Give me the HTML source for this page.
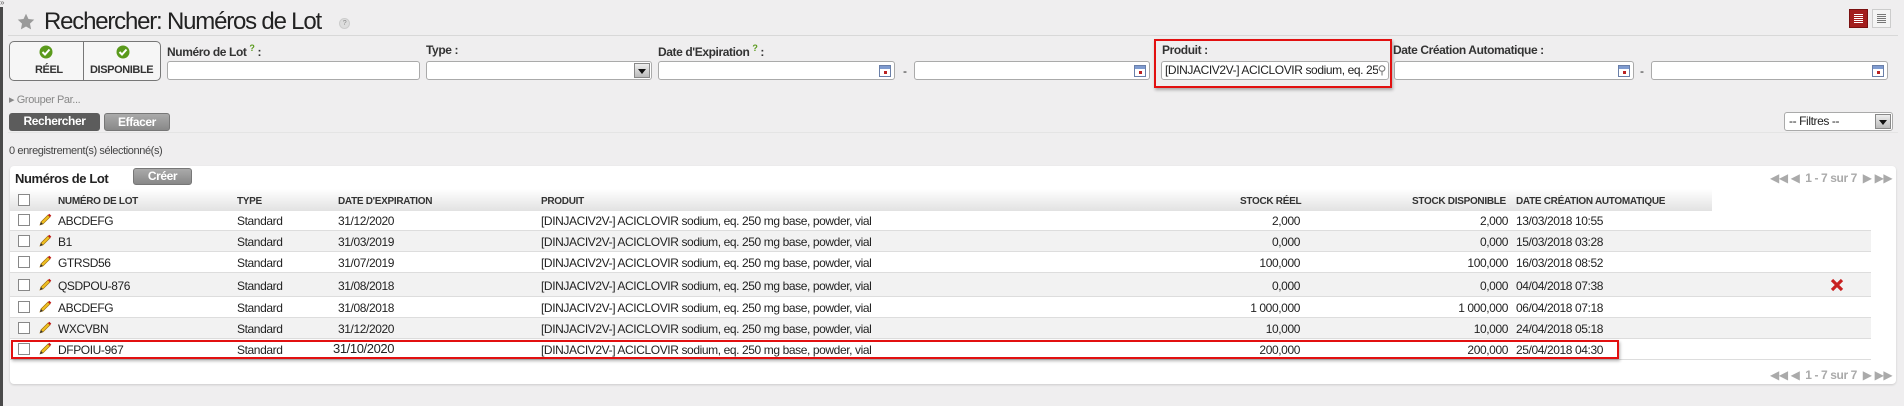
<!DOCTYPE html>
<html><head><meta charset="utf-8"><style>
*{margin:0;padding:0;box-sizing:border-box}
body{width:1904px;height:406px;background:#efeeef;font-family:"Liberation Sans",sans-serif;color:#222;position:relative;overflow:hidden;font-size:12px;letter-spacing:-0.4px}
.a{position:absolute;white-space:nowrap}
.inp{position:absolute;height:19px;background:#fff;border:1px solid #aaa;border-radius:3px}
.lbl{position:absolute;font-size:12px;color:#333}
.cal{position:absolute;right:3px;top:3px;width:12px;height:12px;border:1px solid #6a7fa8;background:linear-gradient(#7f9bd0 0 3px,#fff 3px)}
.cal:after{content:"";position:absolute;left:4px;top:5px;width:3px;height:3px;background:#b22}
.dd{position:absolute;right:1px;top:1px;width:16px;height:15px;background:linear-gradient(#eee,#bbb);border:1px solid #888}
.dd:after{content:"";position:absolute;left:3px;top:5px;border:4px solid transparent;border-top:5px solid #111}
.row{position:absolute;left:10px;width:1861px;border-bottom:1px solid #ddd}
.cb{position:absolute;left:8px;width:12px;height:12px;border:1px solid #888;background:#fff}
.hd{position:absolute;font-size:10px;font-weight:bold;color:#333;top:196px;letter-spacing:-0.3px}
.pen{position:absolute;left:28px;width:14px;height:14px}
.btn{position:absolute;height:18px;border-radius:3px;color:#fff;font-weight:bold;font-size:12px;text-align:center;line-height:17px}
</style></head><body>
<div class="a" style="left:0;top:0;width:3px;height:406px;background:#4a4a4a"></div>
<div class="a" style="left:0;top:-2px;font-size:8px;color:#666;background:#efeeef">»</div>
<svg class="a" style="left:17px;top:13px" width="18" height="18" viewBox="0 0 24 24"><path d="M12 1l3.3 7 7.7.9-5.7 5.3 1.5 7.6L12 18l-6.8 3.8 1.5-7.6L1 8.9 8.7 8z" fill="#9a9a9a"/></svg>
<div class="a" style="left:44px;top:8px;font-size:24px;letter-spacing:-1.2px;color:#222">Rechercher: Numéros de Lot</div>
<div class="a" style="left:339px;top:18px;width:11px;height:11px;border-radius:50%;background:#ddd;border:1px solid #ccc;font-size:7px;color:#888;text-align:center;line-height:10px">?</div>
<div class="a" style="left:8px;top:35px;width:1890px;height:1px;background:#d8d8d8"></div>
<div class="a" style="left:1849px;top:9px;width:19px;height:19px;background:#a31e1e;border:1px solid #7a1010"><div style="margin:4px 4px;height:9px;background:repeating-linear-gradient(#fff 0 1px,transparent 1px 2px)"></div></div>
<div class="a" style="left:1872px;top:9px;width:19px;height:19px;background:#f4f4f4;border:1px solid #ccc"><div style="margin:4px 4px;height:9px;background:repeating-linear-gradient(#777 0 1px,transparent 1px 2px)"></div></div>
<div class="a" style="left:9px;top:41px;width:152px;height:40px;border:1px solid #777;border-radius:5px;background:#f6f6f6"></div>
<div class="a" style="left:83px;top:41px;width:1px;height:40px;background:#777"></div>
<svg class="a" style="left:39px;top:45px" width="14" height="14" viewBox="0 0 14 14"><circle cx="7" cy="7" r="6.5" fill="#5a9a1c"/><path d="M3.5 7l2.5 2.5 4.5-5" stroke="#fff" stroke-width="2" fill="none"/></svg>
<svg class="a" style="left:116px;top:45px" width="14" height="14" viewBox="0 0 14 14"><circle cx="7" cy="7" r="6.5" fill="#5a9a1c"/><path d="M3.5 7l2.5 2.5 4.5-5" stroke="#fff" stroke-width="2" fill="none"/></svg>
<div class="a" style="left:35px;top:64px;font-size:11px;font-weight:bold;color:#333">RÉEL</div>
<div class="a" style="left:90px;top:64px;font-size:11px;font-weight:bold;color:#333">DISPONIBLE</div>
<div class="lbl" style="left:167px;top:43px;font-weight:bold">Numéro de Lot <sup style="color:#5a9a1c;font-size:9px">?</sup> :</div>
<div class="inp" style="left:167px;top:61px;width:253px"></div>
<div class="lbl" style="left:426px;top:43px;font-weight:bold">Type :</div>
<div class="inp" style="left:426px;top:61px;width:226px"><div class="dd"></div></div>
<div class="lbl" style="left:658px;top:43px;font-weight:bold">Date d'Expiration <sup style="color:#5a9a1c;font-size:9px">?</sup> :</div>
<div class="inp" style="left:658px;top:61px;width:237px"><div class="cal"></div></div>
<div class="a" style="left:903px;top:64px">-</div>
<div class="inp" style="left:914px;top:61px;width:236px"><div class="cal"></div></div>
<div class="a" style="left:1154px;top:39px;width:238px;height:49px;border:2px solid #e21010;box-shadow:1px 2px 3px rgba(0,0,0,.3)"></div>
<div class="lbl" style="left:1162px;top:43px;font-weight:bold">Produit :</div>
<div class="inp" style="left:1161px;top:61px;width:228px;overflow:hidden;font-size:12px;line-height:17px;padding-left:3px">[DINJACIV2V-] ACICLOVIR sodium, eq. 250 mg<span style="position:absolute;right:2px;top:0;background:#fff;color:#777">&#9906;</span></div>
<div class="lbl" style="left:1393px;top:43px;font-weight:bold">Date Création Automatique :</div>
<div class="inp" style="left:1394px;top:61px;width:240px"><div class="cal"></div></div>
<div class="a" style="left:1640px;top:64px">-</div>
<div class="inp" style="left:1651px;top:61px;width:237px"><div class="cal"></div></div>
<div class="a" style="left:9px;top:93px;font-size:11px;color:#888">▸ Grouper Par...</div>
<div class="btn" style="left:9px;top:113px;width:91px;background:#5c5c5c">Rechercher</div>
<div class="btn" style="left:104px;top:113px;width:66px;background:linear-gradient(#aaa,#888);border:1px solid #777">Effacer</div>
<div class="inp" style="left:1784px;top:112px;width:109px;border-radius:3px;padding-left:4px;line-height:17px;font-size:12px">-- Filtres --<div class="dd"></div></div>
<div class="a" style="left:8px;top:132px;width:1890px;height:1px;background:#e4e4e4"></div>
<div class="a" style="left:9px;top:145px;font-size:11px;color:#444">0 enregistrement(s) sélectionné(s)</div>
<div class="a" style="left:10px;top:166px;width:1886px;height:218px;background:#fff;border-radius:4px;box-shadow:0 1px 2px rgba(0,0,0,.15)"></div>
<div class="a" style="left:15px;top:171px;font-size:13px;font-weight:bold;color:#222">Numéros de Lot</div>
<div class="btn" style="left:133px;top:168px;width:59px;height:17px;background:linear-gradient(#aaa,#888);border:1px solid #777;line-height:15px">Créer</div>
<div class="a" style="left:1770px;top:171px;font-size:12px;color:#aaa">◀◀ ◀ &nbsp;<b>1 - 7 sur 7</b>&nbsp; ▶ ▶▶</div>
<div class="a" style="left:10px;top:189px;width:1702px;height:22px;background:linear-gradient(#fff,#e2e2e2)"></div>
<div class="cb" style="top:194px;left:18px"></div>
<div class="hd" style="left:58px">NUMÉRO DE LOT</div>
<div class="hd" style="left:237px">TYPE</div>
<div class="hd" style="left:338px">DATE D'EXPIRATION</div>
<div class="hd" style="left:541px">PRODUIT</div>
<div class="hd" style="left:1240px">STOCK RÉEL</div>
<div class="hd" style="left:1412px">STOCK DISPONIBLE</div>
<div class="hd" style="left:1516px">DATE CRÉATION AUTOMATIQUE</div>
<div class="a" style="left:10px;top:211px;width:1861px">
<div class="row" style="left:0;top:0;height:20px;background:#fff"></div>
<div class="row" style="left:0;top:20px;height:21px;background:#f2f2f2"></div>
<div class="row" style="left:0;top:41px;height:21px;background:#fff"></div>
<div class="row" style="left:0;top:62px;height:24px;background:#f2f2f2"></div>
<div class="row" style="left:0;top:86px;height:21px;background:#fff"></div>
<div class="row" style="left:0;top:107px;height:21px;background:#f2f2f2"></div>
<div class="row" style="left:0;top:128px;height:21px;background:#fff"></div>
</div>
<svg width="0" height="0" style="position:absolute"><defs><symbol id="p" viewBox="0 0 14 14"><path d="M2 12l1-3 7-7 2 2-7 7z" fill="#f0c020" stroke="#a07010" stroke-width=".7"/><path d="M10 2l1.3-1.3 2 2L12 4z" fill="#c01818"/><path d="M2 12l1-3 2 2z" fill="#333"/></symbol></defs></svg>
<div style="position:absolute;left:0;top:0;width:1904px;height:406px">
<div class="cb" style="left:18px;top:214px"></div><svg class="pen" style="left:38px;top:213px"><use href="#p"/></svg>
<div class="a" style="left:58px;top:214px">ABCDEFG</div><div class="a" style="left:237px;top:214px">Standard</div><div class="a" style="left:338px;top:214px">31/12/2020</div><div class="a" style="left:541px;top:214px">[DINJACIV2V-] ACICLOVIR sodium, eq. 250 mg base, powder, vial</div><div class="a" style="right:604px;top:214px">2,000</div><div class="a" style="right:396px;top:214px">2,000</div><div class="a" style="left:1516px;top:214px">13/03/2018 10:55</div>

<div class="cb" style="left:18px;top:235px"></div><svg class="pen" style="left:38px;top:234px"><use href="#p"/></svg>
<div class="a" style="left:58px;top:235px">B1</div><div class="a" style="left:237px;top:235px">Standard</div><div class="a" style="left:338px;top:235px">31/03/2019</div><div class="a" style="left:541px;top:235px">[DINJACIV2V-] ACICLOVIR sodium, eq. 250 mg base, powder, vial</div><div class="a" style="right:604px;top:235px">0,000</div><div class="a" style="right:396px;top:235px">0,000</div><div class="a" style="left:1516px;top:235px">15/03/2018 03:28</div>

<div class="cb" style="left:18px;top:256px"></div><svg class="pen" style="left:38px;top:255px"><use href="#p"/></svg>
<div class="a" style="left:58px;top:256px">GTRSD56</div><div class="a" style="left:237px;top:256px">Standard</div><div class="a" style="left:338px;top:256px">31/07/2019</div><div class="a" style="left:541px;top:256px">[DINJACIV2V-] ACICLOVIR sodium, eq. 250 mg base, powder, vial</div><div class="a" style="right:604px;top:256px">100,000</div><div class="a" style="right:396px;top:256px">100,000</div><div class="a" style="left:1516px;top:256px">16/03/2018 08:52</div>

<div class="cb" style="left:18px;top:279px"></div><svg class="pen" style="left:38px;top:278px"><use href="#p"/></svg>
<div class="a" style="left:58px;top:279px">QSDPOU-876</div><div class="a" style="left:237px;top:279px">Standard</div><div class="a" style="left:338px;top:279px">31/08/2018</div><div class="a" style="left:541px;top:279px">[DINJACIV2V-] ACICLOVIR sodium, eq. 250 mg base, powder, vial</div><div class="a" style="right:604px;top:279px">0,000</div><div class="a" style="right:396px;top:279px">0,000</div><div class="a" style="left:1516px;top:279px">04/04/2018 07:38</div>
<svg class="a" style="left:1830px;top:278px" width="14" height="14" viewBox="0 0 14 14"><path d="M2 2l10 10M12 2L2 12" stroke="#c82020" stroke-width="3.2"/></svg>

<div class="cb" style="left:18px;top:301px"></div><svg class="pen" style="left:38px;top:300px"><use href="#p"/></svg>
<div class="a" style="left:58px;top:301px">ABCDEFG</div><div class="a" style="left:237px;top:301px">Standard</div><div class="a" style="left:338px;top:301px">31/08/2018</div><div class="a" style="left:541px;top:301px">[DINJACIV2V-] ACICLOVIR sodium, eq. 250 mg base, powder, vial</div><div class="a" style="right:604px;top:301px">1 000,000</div><div class="a" style="right:396px;top:301px">1 000,000</div><div class="a" style="left:1516px;top:301px">06/04/2018 07:18</div>

<div class="cb" style="left:18px;top:322px"></div><svg class="pen" style="left:38px;top:321px"><use href="#p"/></svg>
<div class="a" style="left:58px;top:322px">WXCVBN</div><div class="a" style="left:237px;top:322px">Standard</div><div class="a" style="left:338px;top:322px">31/12/2020</div><div class="a" style="left:541px;top:322px">[DINJACIV2V-] ACICLOVIR sodium, eq. 250 mg base, powder, vial</div><div class="a" style="right:604px;top:322px">10,000</div><div class="a" style="right:396px;top:322px">10,000</div><div class="a" style="left:1516px;top:322px">24/04/2018 05:18</div>

<div class="cb" style="left:18px;top:343px"></div><svg class="pen" style="left:38px;top:342px"><use href="#p"/></svg>
<div class="a" style="left:58px;top:343px">DFPOIU-967</div><div class="a" style="left:237px;top:343px">Standard</div><div class="a" style="left:333px;top:341px;font-size:13px;background:#fff">31/10/2020</div><div class="a" style="left:541px;top:343px">[DINJACIV2V-] ACICLOVIR sodium, eq. 250 mg base, powder, vial</div><div class="a" style="right:604px;top:343px">200,000</div><div class="a" style="right:396px;top:343px">200,000</div><div class="a" style="left:1516px;top:343px">25/04/2018 04:30</div>
</div>
<div class="a" style="left:11px;top:340px;width:1608px;height:19px;border:2px solid #e21010;box-shadow:1px 2px 3px rgba(0,0,0,.3)"></div>
<div class="a" style="left:1770px;top:368px;font-size:12px;color:#aaa">◀◀ ◀ &nbsp;<b>1 - 7 sur 7</b>&nbsp; ▶ ▶▶</div>
</body></html>
